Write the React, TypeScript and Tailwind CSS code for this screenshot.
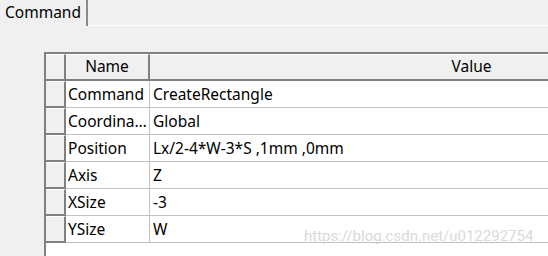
import React from "react";

const rows: [string, string][] = [
  ["Command", "CreateRectangle"],
  ["Coordina…", "Global"],
  ["Position", "Lx/2-4*W-3*S ,1mm ,0mm"],
  ["Axis", "Z"],
  ["XSize", "-3"],
  ["YSize", "W"],
];

export default function App() {
  return (
    <div className="relative w-[548px] h-[256px] overflow-hidden bg-[#f0f0f0] text-black text-[15.5px] font-['Noto_Sans',sans-serif]">
      <div className="flex h-[26px]">
        <div className="w-[88px] h-[26px] border-r-2 border-[#8a8a8a] pl-[5px] leading-[24px]">Command</div>
        <div className="flex-1 border-b border-white" />
      </div>
      <div className="ml-[44px] mt-[26px] w-[760px] h-[210px] border-l-2 border-t-2 border-[#808080] bg-white">
        <div className="flex h-[27px] border-b-2 border-[#808080] bg-[#f0f0f0]">
          <div className="w-[20px] h-full border-r-2 border-[#808080] border-t border-t-white" />
          <div className="w-[84px] h-full border-r-2 border-[#808080] border-t border-t-white flex items-center justify-center leading-none">
            Name
          </div>
          <div className="w-[645px] h-full border-r-2 border-[#808080] border-t border-t-white flex items-center justify-center leading-none">
            Value
          </div>
        </div>
        {rows.map(([k, v]) => (
          <div key={k} className="flex h-[27px]">
            <div className="w-[20px] h-full bg-[#f0f0f0] border-r-2 border-b-2 border-[#808080] border-t border-t-white" />
            <div className="w-[84px] h-full border-r border-b border-[#c0c0c0] pl-[2px] flex items-center leading-none pt-[1px] whitespace-nowrap overflow-hidden">
              {k}
            </div>
            <div className="w-[645px] h-full border-b border-[#c0c0c0] pl-[3px] flex items-center leading-none pt-[1px] whitespace-nowrap">
              {v}
            </div>
          </div>
        ))}
      </div>
      <div className="absolute left-[304px] top-[229px] text-[15px] leading-none text-[#dadada] font-['Roboto',sans-serif] whitespace-nowrap">
        https://blog.csdn.net/u012292754
      </div>
    </div>
  );
}
